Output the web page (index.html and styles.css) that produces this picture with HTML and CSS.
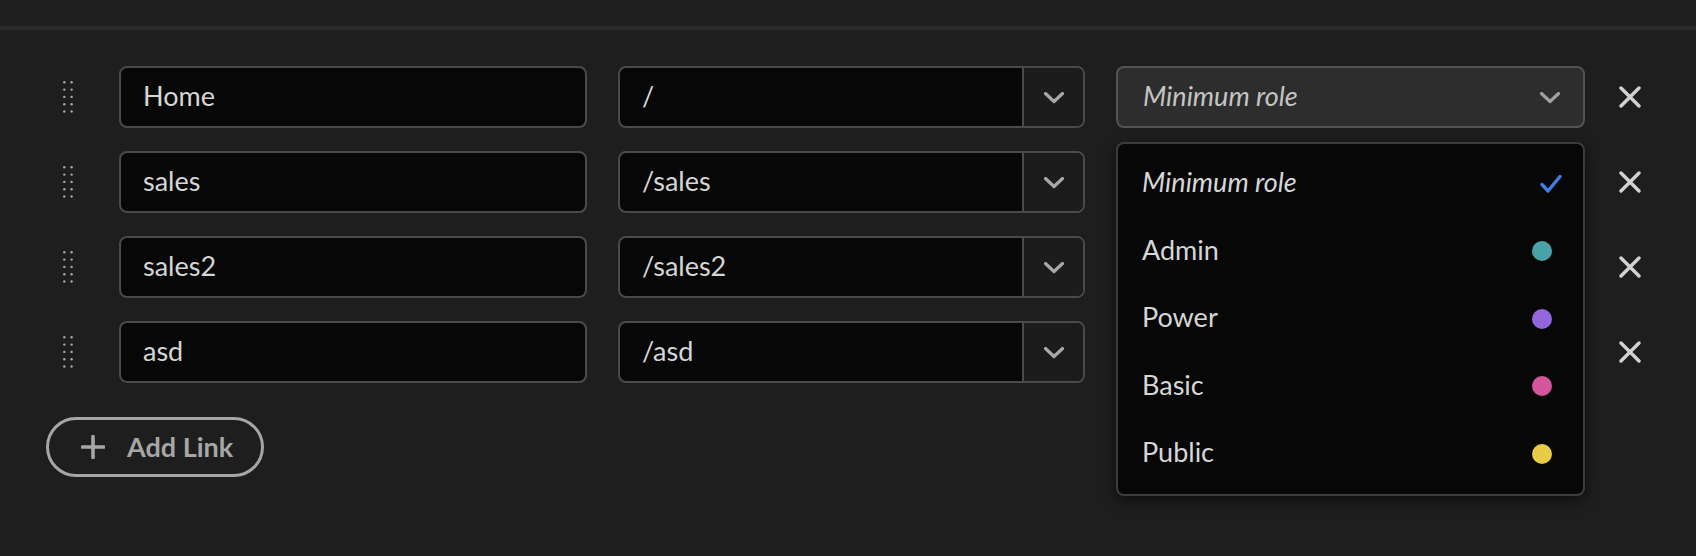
FILE: index.html
```html
<!DOCTYPE html>
<html>
<head>
<meta charset="utf-8">
<link rel="stylesheet" href="styles.css">
</head>
<body>
<div class="header"></div>
<div class="content">
  <div class="links">
    <div class="row">
      <div class="handle"><svg width="10" height="32" viewBox="0 0 10 32"><g fill="#a8a8a8"><circle cx="1.3" cy="1.3" r="1.2"/><circle cx="8.6" cy="1.3" r="1.2"/><circle cx="1.3" cy="8.6" r="1.2"/><circle cx="8.6" cy="8.6" r="1.2"/><circle cx="1.3" cy="15.9" r="1.2"/><circle cx="8.6" cy="15.9" r="1.2"/><circle cx="1.3" cy="23.2" r="1.2"/><circle cx="8.6" cy="23.2" r="1.2"/><circle cx="1.3" cy="30.5" r="1.2"/><circle cx="8.6" cy="30.5" r="1.2"/></g></svg></div>
      <div class="field name">Home</div>
      <div class="field path"><div class="path-text">/</div><div class="path-btn"><svg width="20" height="12" viewBox="0 0 20 12"><polyline points="1.5,1.5 10,9.5 18.5,1.5" fill="none" stroke="#a8a8a8" stroke-width="3.2" stroke-linecap="round" stroke-linejoin="round"/></svg></div></div>
      <div class="role-wrap">
        <div class="field role"><span>Minimum role</span><svg width="20" height="12" viewBox="0 0 20 12"><polyline points="1.5,1.5 10,9.5 18.5,1.5" fill="none" stroke="#a0a0a0" stroke-width="3.2" stroke-linecap="round" stroke-linejoin="round"/></svg></div>
        <div class="menu">
          <div class="item selected"><span class="item-label italic">Minimum role</span><svg class="check" width="22" height="20" viewBox="0 0 22 20"><polyline points="2,10.5 8,17 20,2.5" fill="none" stroke="#3f7fe3" stroke-width="3.4" stroke-linecap="round" stroke-linejoin="round"/></svg></div>
          <div class="item"><span class="item-label">Admin</span><span class="dot admin"></span></div>
          <div class="item"><span class="item-label">Power</span><span class="dot power"></span></div>
          <div class="item"><span class="item-label">Basic</span><span class="dot basic"></span></div>
          <div class="item"><span class="item-label">Public</span><span class="dot public"></span></div>
        </div>
      </div>
      <div class="remove"><svg width="22" height="22" viewBox="0 0 22 22"><path d="M2 2 L20 20 M20 2 L2 20" stroke="#d2d2d2" stroke-width="3.4" stroke-linecap="round"/></svg></div>
    </div>
    <div class="row">
      <div class="handle"><svg width="10" height="32" viewBox="0 0 10 32"><g fill="#a8a8a8"><circle cx="1.3" cy="1.3" r="1.2"/><circle cx="8.6" cy="1.3" r="1.2"/><circle cx="1.3" cy="8.6" r="1.2"/><circle cx="8.6" cy="8.6" r="1.2"/><circle cx="1.3" cy="15.9" r="1.2"/><circle cx="8.6" cy="15.9" r="1.2"/><circle cx="1.3" cy="23.2" r="1.2"/><circle cx="8.6" cy="23.2" r="1.2"/><circle cx="1.3" cy="30.5" r="1.2"/><circle cx="8.6" cy="30.5" r="1.2"/></g></svg></div>
      <div class="field name">sales</div>
      <div class="field path"><div class="path-text">/sales</div><div class="path-btn"><svg width="20" height="12" viewBox="0 0 20 12"><polyline points="1.5,1.5 10,9.5 18.5,1.5" fill="none" stroke="#a8a8a8" stroke-width="3.2" stroke-linecap="round" stroke-linejoin="round"/></svg></div></div>
      <div class="role-wrap empty"></div>
      <div class="remove"><svg width="22" height="22" viewBox="0 0 22 22"><path d="M2 2 L20 20 M20 2 L2 20" stroke="#d2d2d2" stroke-width="3.4" stroke-linecap="round"/></svg></div>
    </div>
    <div class="row">
      <div class="handle"><svg width="10" height="32" viewBox="0 0 10 32"><g fill="#a8a8a8"><circle cx="1.3" cy="1.3" r="1.2"/><circle cx="8.6" cy="1.3" r="1.2"/><circle cx="1.3" cy="8.6" r="1.2"/><circle cx="8.6" cy="8.6" r="1.2"/><circle cx="1.3" cy="15.9" r="1.2"/><circle cx="8.6" cy="15.9" r="1.2"/><circle cx="1.3" cy="23.2" r="1.2"/><circle cx="8.6" cy="23.2" r="1.2"/><circle cx="1.3" cy="30.5" r="1.2"/><circle cx="8.6" cy="30.5" r="1.2"/></g></svg></div>
      <div class="field name">sales2</div>
      <div class="field path"><div class="path-text">/sales2</div><div class="path-btn"><svg width="20" height="12" viewBox="0 0 20 12"><polyline points="1.5,1.5 10,9.5 18.5,1.5" fill="none" stroke="#a8a8a8" stroke-width="3.2" stroke-linecap="round" stroke-linejoin="round"/></svg></div></div>
      <div class="role-wrap empty"></div>
      <div class="remove"><svg width="22" height="22" viewBox="0 0 22 22"><path d="M2 2 L20 20 M20 2 L2 20" stroke="#d2d2d2" stroke-width="3.4" stroke-linecap="round"/></svg></div>
    </div>
    <div class="row">
      <div class="handle"><svg width="10" height="32" viewBox="0 0 10 32"><g fill="#a8a8a8"><circle cx="1.3" cy="1.3" r="1.2"/><circle cx="8.6" cy="1.3" r="1.2"/><circle cx="1.3" cy="8.6" r="1.2"/><circle cx="8.6" cy="8.6" r="1.2"/><circle cx="1.3" cy="15.9" r="1.2"/><circle cx="8.6" cy="15.9" r="1.2"/><circle cx="1.3" cy="23.2" r="1.2"/><circle cx="8.6" cy="23.2" r="1.2"/><circle cx="1.3" cy="30.5" r="1.2"/><circle cx="8.6" cy="30.5" r="1.2"/></g></svg></div>
      <div class="field name">asd</div>
      <div class="field path"><div class="path-text">/asd</div><div class="path-btn"><svg width="20" height="12" viewBox="0 0 20 12"><polyline points="1.5,1.5 10,9.5 18.5,1.5" fill="none" stroke="#a8a8a8" stroke-width="3.2" stroke-linecap="round" stroke-linejoin="round"/></svg></div></div>
      <div class="role-wrap empty"></div>
      <div class="remove"><svg width="22" height="22" viewBox="0 0 22 22"><path d="M2 2 L20 20 M20 2 L2 20" stroke="#d2d2d2" stroke-width="3.4" stroke-linecap="round"/></svg></div>
    </div>
  </div>
  <button class="add"><svg width="24" height="24" viewBox="0 0 24 24"><path d="M12 1.5 V22.5 M1.5 12 H22.5" stroke="#a6a6a6" stroke-width="3.6" stroke-linecap="round"/></svg><span>Add Link</span></button>
</div>
</body>
</html>
```
FILE: styles.css
```css
html, body {
  margin: 0;
  padding: 0;
  background: #1e1e1e;
  width: 1696px;
  height: 556px;
  overflow: hidden;
  font-family: Lato, "Liberation Sans", sans-serif;
}

.header {
  height: 26px;
  background: #1f1f1f;
  border-bottom: 4px solid #2b2b2b;
}

.content {
  padding: 36px 0 0 46px;
}

.links {
  display: flex;
  flex-direction: column;
  gap: 23px;
}

.row {
  display: flex;
  align-items: center;
  gap: 31px;
  height: 62px;
}

.handle {
  width: 42px;
  display: flex;
  justify-content: center;
  align-items: center;
  padding-left: 1px;
  box-sizing: border-box;
}

.handle svg {
  display: block;
}

.field {
  box-sizing: border-box;
  height: 62px;
  border: 2px solid #4a4a4a;
  border-radius: 8px;
  background: #070707;
  color: #d6d6d6;
  font-size: 27px;
  display: flex;
  align-items: center;
  padding: 0 22px 3px;
}

.name {
  width: 468px;
}

.path {
  width: 467px;
  padding: 0;
  overflow: hidden;
}

.path-text {
  flex: 1;
  padding: 0 22px 3px;
}

.path-btn {
  width: 59px;
  height: 100%;
  border-left: 2px solid #4a4a4a;
  background: #1c1c1c;
  display: flex;
  align-items: center;
  justify-content: center;
}

.path-btn svg {
  display: block;
  margin-top: 1px;
}

.role-wrap {
  position: relative;
  width: 469px;
  height: 62px;
}

.role {
  width: 100%;
  background: #2d2d2d;
  border-color: #535353;
  font-style: italic;
  color: #c4c4c4;
  justify-content: space-between;
  padding: 0 23px 0 25px;
}

.role span {
  padding-bottom: 3px;
}

.role svg {
  display: block;
  margin-top: 1px;
}

.menu {
  position: absolute;
  top: 76px;
  left: 0;
  right: 0;
  box-sizing: border-box;
  background: #070707;
  border: 2px solid #3c3c3c;
  border-radius: 8px;
  padding: 6px 0;
  box-shadow: 0 4px 14px rgba(0, 0, 0, 0.55);
  z-index: 5;
}

.item {
  height: 67.5px;
  display: flex;
  align-items: center;
  justify-content: space-between;
  padding: 0 21px 0 24px;
  color: #d6d6d6;
  font-size: 27px;
}

.item-label {
  padding-bottom: 4px;
}

.italic {
  font-style: italic;
}

.check {
  display: block;
}

.dot {
  width: 20px;
  height: 20px;
  border-radius: 50%;
  margin-right: 10px;
}

.dot.admin { background: #4aa2a8; }
.dot.power { background: #9466de; }
.dot.basic { background: #d6559c; }
.dot.public { background: #e8cc46; }

.remove {
  width: 28px;
  display: flex;
  justify-content: center;
  align-items: center;
}

.remove svg {
  display: block;
}

.add {
  margin-top: 34px;
  box-sizing: border-box;
  width: 218px;
  height: 60px;
  border: 3px solid #a6a6a6;
  border-radius: 30px;
  background: transparent;
  color: #a6a6a6;
  font-family: Lato, "Liberation Sans", sans-serif;
  font-weight: 700;
  font-size: 27px;
  display: flex;
  align-items: center;
  gap: 22px;
  padding: 0 0 0 32px;
}

.add span {
  padding-bottom: 2px;
}

.add svg {
  display: block;
}
```
